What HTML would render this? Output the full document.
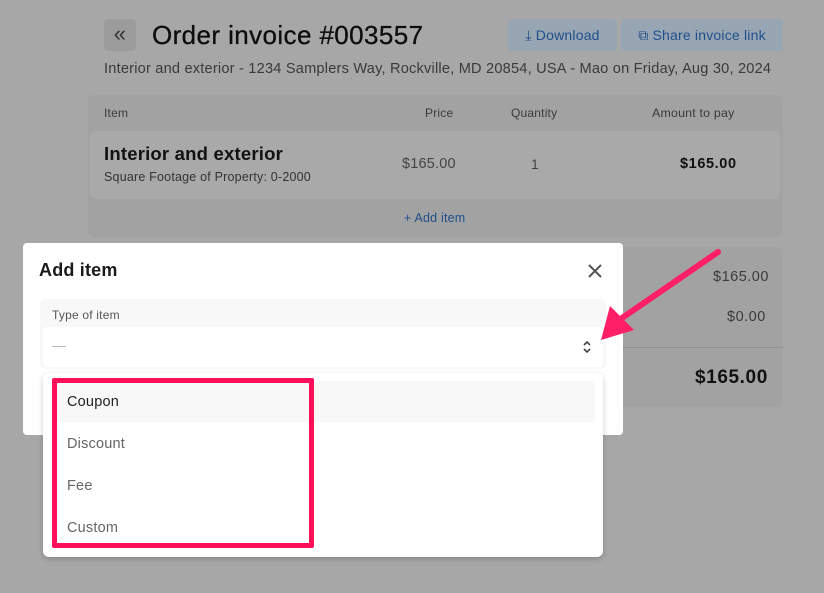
<!DOCTYPE html><html><head><style>
body{margin:0;width:824px;height:593px;background:#a7a7a7;font-family:"Liberation Sans",sans-serif;position:relative;overflow:hidden;letter-spacing:.2px}
.a{position:absolute;white-space:nowrap}
</style></head><body>
<div class="a" style="left:104px;top:19px;width:32px;height:32px;background:#9c9c9c;border-radius:4px;color:#333;font-size:22px;line-height:30px;text-align:center">«</div>
<div class="a" style="left:152px;top:19px;font-size:26px;color:#0d0d0d;line-height:32px;letter-spacing:.4px;-webkit-text-stroke:.3px #0d0d0d">Order invoice #003557</div>
<div class="a" style="left:508px;top:19px;width:109px;height:32px;background:#98a5b3;border-radius:4px;color:#1f4f8a;font-size:14px;line-height:32px;text-align:center">⤓ Download</div>
<div class="a" style="left:621px;top:19px;width:162px;height:32px;background:#98a5b3;border-radius:4px;color:#1f4f8a;font-size:14px;line-height:32px;text-align:center">⧉ Share invoice link</div>
<div class="a" style="left:104px;top:61px;font-size:14.6px;color:#3a3a3a">Interior and exterior - 1234 Samplers Way, Rockville, MD 20854, USA - Mao on Friday, Aug 30, 2024</div>
<div class="a" style="left:88px;top:95px;width:695px;height:142px;background:#a2a2a2;border-radius:6px"></div>
<div class="a" style="left:104px;top:106px;font-size:12px;color:#3a3a3a">Item</div>
<div class="a" style="left:425px;top:106px;font-size:12px;color:#3a3a3a">Price</div>
<div class="a" style="left:511px;top:106px;font-size:12px;color:#3a3a3a">Quantity</div>
<div class="a" style="left:652px;top:106px;font-size:12.4px;color:#3a3a3a">Amount to pay</div>
<div class="a" style="left:90px;top:131px;width:690px;height:68px;background:#a9a9a9;border-radius:6px"></div>
<div class="a" style="left:104px;top:143px;font-size:18.5px;font-weight:bold;color:#111">Interior and exterior</div>
<div class="a" style="left:104px;top:170px;font-size:12.5px;color:#333">Square Footage of Property: 0-2000</div>
<div class="a" style="left:402px;top:156px;font-size:14.5px;color:#444">$165.00</div>
<div class="a" style="left:531px;top:156px;font-size:14px;color:#444">1</div>
<div class="a" style="left:680px;top:156px;font-size:14.5px;font-weight:bold;color:#111;letter-spacing:.6px">$165.00</div>
<div class="a" style="left:404px;top:211px;font-size:12.5px;color:#1f4f8a">+ Add item</div>
<div class="a" style="left:600px;top:247px;width:183px;height:160px;background:#a2a2a2;border-radius:6px"></div>
<div class="a" style="left:610px;top:347px;width:173px;height:1px;background:#8f8f8f"></div>
<div class="a" style="left:713px;top:269px;font-size:14.5px;color:#3a3a3a;letter-spacing:.5px">$165.00</div>
<div class="a" style="left:727px;top:309px;font-size:14.5px;color:#3a3a3a;letter-spacing:.5px">$0.00</div>
<div class="a" style="left:695px;top:367px;font-size:19px;font-weight:bold;color:#111;letter-spacing:.6px">$165.00</div>

<div class="a" style="left:23px;top:243px;width:600px;height:192px;background:#fff;border-radius:4px"></div>
<div class="a" style="left:39px;top:260px;font-size:18px;font-weight:bold;color:#1a1a1a">Add item</div>
<svg class="a" style="left:587px;top:263px" width="16" height="16"><path d="M2 2L14 14M14 2L2 14" stroke="#555" stroke-width="2"/></svg>
<div class="a" style="left:40px;top:299px;width:566px;height:70px;background:#f8f8f8;border-radius:6px"></div>
<div class="a" style="left:43px;top:327px;width:560px;height:40px;background:#fff;border-radius:4px"></div>
<div class="a" style="left:52px;top:308px;font-size:12px;color:#555">Type of item</div>
<div class="a" style="left:52px;top:346px;width:14px;height:1px;background:#bbb"></div>
<svg class="a" style="left:582px;top:340px" width="10" height="14"><path d="M2 5L5 2L8 5M2 9L5 12L8 9" stroke="#444" stroke-width="1.6" fill="none"/></svg>
<div class="a" style="left:43px;top:373px;width:560px;height:184px;background:#fff;border-radius:6px;box-shadow:0 2px 6px rgba(0,0,0,.2)"></div>
<div class="a" style="left:55px;top:381px;width:540px;height:41px;background:#f8f8f8;border-radius:4px"></div>
<div class="a" style="left:67px;top:394px;font-size:14.5px;color:#222">Coupon</div>
<div class="a" style="left:67px;top:436px;font-size:14.5px;color:#666">Discount</div>
<div class="a" style="left:67px;top:478px;font-size:14.5px;color:#666">Fee</div>
<div class="a" style="left:67px;top:520px;font-size:14.5px;color:#666">Custom</div>
<div class="a" style="left:52px;top:378px;width:252px;height:160px;border:5px solid #ff0f5a;border-radius:2px"></div>
<svg class="a" style="left:0;top:0" width="824" height="593"><path d="M718 252L622 318" stroke="#ff1f66" stroke-width="6" stroke-linecap="round"/><path d="M601 340L610 306L634 330Z" fill="#ff1f66"/></svg>
</body></html>
